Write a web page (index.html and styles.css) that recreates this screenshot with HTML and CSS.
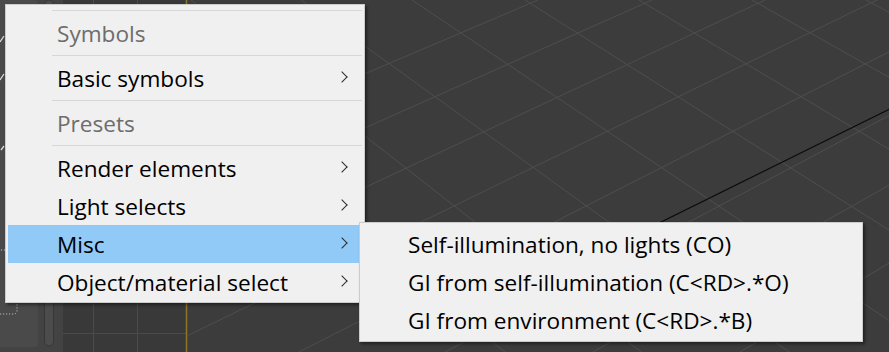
FILE: index.html
```html
<!DOCTYPE html>
<html lang="en">
<head>
<meta charset="UTF-8">
<title>Render element menu</title>
<link rel="stylesheet" href="styles.css">
</head>
<body>
<div class="screen">

    <!-- backdrop: side panel + two viewports -->
    <svg class="backdrop" width="889" height="352" viewBox="0 0 889 352">
        <rect x="0" y="0" width="889" height="352" fill="#3c3c3c"/>
        <!-- command panel strip -->
        <rect x="0" y="0" width="63" height="352" fill="#434343"/>
        <rect x="-8" y="0" width="46" height="347" rx="4" fill="#4a4a4a"/>
        <rect x="-8" y="250" width="25" height="64" rx="3" fill="none" stroke="#cfcfcf" stroke-width="1" stroke-dasharray="1 2"/>
        <rect x="44.5" y="0" width="9" height="346" rx="4.5" fill="#4c4c4c" stroke="#363636"/>
        <path d="M0 42 L4 36 M0 80 L4 74 M1 150 L4 146" stroke="#d8d8d8" stroke-width="1.3"/>
        <!-- left (ortho) viewport -->
        <rect x="63" y="0" width="124" height="352" fill="#393939"/>
        <g stroke="#4b4b4b" stroke-width="1">
            <line x1="93.5" y1="0" x2="93.5" y2="352"/>
            <line x1="137.5" y1="0" x2="137.5" y2="352"/>
            <line x1="63" y1="333.5" x2="187" y2="333.5"/>
        </g>
        <line x1="186.5" y1="0" x2="186.5" y2="352" stroke="#8f7528" stroke-width="1.5"/>
        <!-- right (perspective) viewport grid -->
        <g stroke="#4e4e4e" stroke-width="1" clip-path="url(#persp)">
            <line x1="75" y1="0" x2="505" y2="352"/>
            <line x1="191" y1="0" x2="641" y2="352"/>
            <line x1="301" y1="0" x2="789" y2="352"/>
            <line x1="412" y1="0" x2="936" y2="352"/>
            <line x1="525" y1="0" x2="1082" y2="352"/>
            <line x1="639" y1="0" x2="1229" y2="352"/>
            <line x1="752" y1="0" x2="1376" y2="352"/>
            <line x1="866" y1="0" x2="1523" y2="352"/>

            <line x1="538" y1="0" x2="-288" y2="352"/>
            <line x1="652" y1="0" x2="-138" y2="352"/>
            <line x1="765" y1="0" x2="14" y2="352"/>
            <line x1="877" y1="0" x2="154" y2="352"/>
            <line x1="991" y1="0" x2="299" y2="352"/>
            <line x1="1106" y1="0" x2="445" y2="352"/>
            <line x1="1218" y1="0" x2="593" y2="352"/>
            <line x1="1330" y1="0" x2="740" y2="352"/>
        </g>
        <clipPath id="persp"><rect x="188" y="0" width="701" height="352"/></clipPath>
        <line x1="560" y1="272" x2="900" y2="104" stroke="#0a0a0a" stroke-width="1.2"/>
    </svg>

    <!-- main context menu -->
    <div class="menu main-menu">
        <div class="sep"></div>
        <div class="item header">Symbols</div>
        <div class="sep"></div>
        <div class="item sub">Basic symbols</div>
        <div class="sep"></div>
        <div class="item header">Presets</div>
        <div class="sep"></div>
        <div class="item sub">Render elements</div>
        <div class="item sub">Light selects</div>
        <div class="item sub active">Misc</div>
        <div class="item sub">Object/material select</div>
    </div>

    <!-- Misc submenu -->
    <div class="menu sub-menu">
        <div class="item">Self-illumination, no lights (CO)</div>
        <div class="item">GI from self-illumination (C&lt;RD&gt;.*O)</div>
        <div class="item">GI from environment (C&lt;RD&gt;.*B)</div>
    </div>
</div>
</body>
</html>
```
FILE: styles.css
```css
body { margin: 0; background: #3c3c3c; }

.screen {
    position: relative; width: 889px; height: 352px; overflow: hidden;
    font-family: "Open Sans", "Noto Sans", sans-serif; font-size: 22.6px;
}
.backdrop { position: absolute; left: 0; top: 0; display: block; }

.menu {
    position: absolute; box-sizing: border-box;
    background: #f0f0f0; border: 1px solid #cccccc;
    box-shadow: 2px 2px 3px rgba(0, 0, 0, .45);
}
.main-menu { left: 5px; top: 4px; width: 360px; padding: 2px 2px 1px; }
.sub-menu  { left: 359px; top: 222px; width: 504px; padding: 2px; }

.sep { height: 1px; margin: 3px 0 3px 44px; background: #d7d7d7; }

.item {
    display: flex; align-items: center;
    height: 38px; padding-left: 49px; color: #000;
    white-space: nowrap;
}
.sub-menu .item { padding-left: 46px; }
.item.header { color: #6d6d6d; }
.item.active { background: #91c9f7; }

/* submenu chevron */
.item.sub { position: relative; }
.item.sub::after {
    content: ""; position: absolute; right: 16px; top: 50%;
    width: 7px; height: 7px; margin-top: -5px;
    border-right: 1.4px solid #2b2b2b; border-top: 1.4px solid #2b2b2b;
    transform: rotate(45deg);
}
```
